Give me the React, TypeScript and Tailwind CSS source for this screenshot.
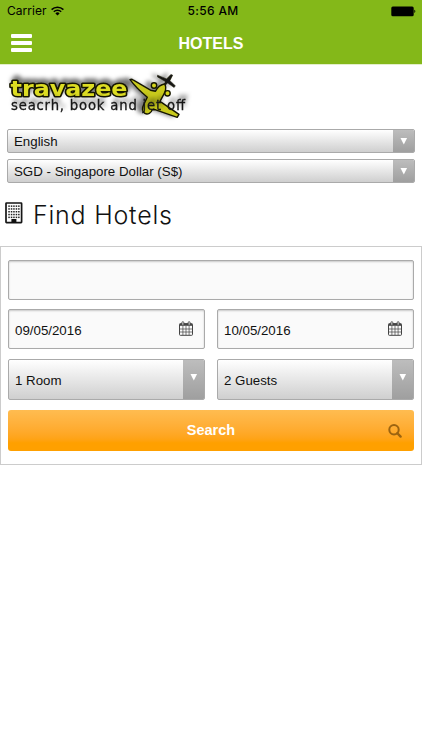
import type { ReactNode } from "react";

// ── Icons ─────────────────────────────────────────────

function WifiIcon() {
  return (
    <svg viewBox="0 0 13 10" className="h-[10px] w-[13px]" fill="none" stroke="black" strokeWidth="1.5">
      <path d="M0.6 3.6a8.4 8.4 0 0 1 11.8 0" />
      <path d="M2.8 5.8a5.3 5.3 0 0 1 7.4 0" />
      <path d="M6.5 9.6 4.4 7.4a3 3 0 0 1 4.2 0z" fill="black" stroke="none" />
    </svg>
  );
}

function BatteryIcon() {
  return (
    <svg viewBox="0 0 25 11" className="h-[11px] w-[25px]">
      <rect x="0.3" y="0.5" width="22.4" height="9.8" rx="1.5" />
      <path d="M23.3 3.8c1.4.3 1.4 2.9 0 3.2z" />
    </svg>
  );
}

function BuildingIcon() {
  return (
    <svg viewBox="0 0 18 22" className="mb-[3px] h-[22px] w-[18px]">
      <rect x="1" y="1" width="15.6" height="19.6" rx="0.5" fill="white" stroke="#161616" strokeWidth="1.7" />
      {[3.4, 6.2, 9, 11.8, 14.6].map((y) =>
        [3.3, 5.8, 8.2, 10.7, 13.1].map((x) => (
          <rect key={`${x}-${y}`} x={x} y={y} width="1.5" height="1.5" fill="#222" />
        )),
      )}
      <path d="M6.4 17h5v4h-5z" fill="#111" />
    </svg>
  );
}

function CalendarIcon() {
  return (
    <svg viewBox="0 0 14 15" className="mb-0.5 h-[15px] w-[14px]" fill="none" stroke="#444">
      <rect x="0.5" y="2.6" width="13" height="11.7" rx="0.8" />
      <path d="M0.8 3.8h12.4" strokeWidth="2" />
      <path d="M3.9 5v9M7 5v9M10.1 5v9M1 8h12M1 11h12" strokeWidth="0.7" />
      <rect x="2.9" y="0.7" width="1.9" height="3.5" rx="0.8" fill="#ddd" strokeWidth="0.8" />
      <rect x="9.2" y="0.7" width="1.9" height="3.5" rx="0.8" fill="#ddd" strokeWidth="0.8" />
    </svg>
  );
}

function SearchIcon() {
  return (
    <svg viewBox="0 0 14 14" className="size-[14px]" fill="none" stroke="#9c6410" strokeWidth="2">
      <circle cx="6" cy="5.8" r="4.7" />
      <path d="m9.4 9.2 3.2 3.4" strokeWidth="2.4" strokeLinecap="round" />
    </svg>
  );
}

function Logo() {
  return (
    <svg viewBox="0 0 182 50" className="h-[50px] w-[182px] overflow-visible">
      <defs>
        <filter id="lift" x="-10%" y="-40%" width="120%" height="180%">
          <feDropShadow dx="2" dy="-4" stdDeviation="2" floodColor="#000" floodOpacity="0.55" />
        </filter>
        <filter id="lift-plane" x="-30%" y="-30%" width="160%" height="160%">
          <feDropShadow dx="-5" dy="-1" stdDeviation="2.2" floodColor="#000" floodOpacity="0.5" />
        </filter>
      </defs>

      <text x="3.5" y="24.3" textLength="117" lengthAdjust="spacingAndGlyphs" fontSize="21" fontFamily="'DejaVu Sans', sans-serif" fill="#dddd23" stroke="#151500" strokeWidth="3" strokeLinejoin="round" paintOrder="stroke" fontWeight="700" filter="url(#lift)">travazee</text>

      {/* Plane */}
      <g stroke="#171700" strokeWidth="1.4" strokeLinejoin="round" filter="url(#lift-plane)">
        <path
          d="M123 7.6q1.5-.8 3.5.6l17 10 5 1c2-4 5-6.5 9.5-7.4 1.3 3.8.6 8-1.8 11.6l-3.2 6 19 13-1.8 3-21.5-7.6-3.4-.2c-1 3.2-4.4 5.4-7.5 3.8-3-1.6-2.8-5.6-.9-9.2l3.4-7c-6-5-12.6-11.2-17.3-17.6z"
          fill="#c9ca1d"
        />
        <circle cx="147" cy="13.5" r="2.7" fill="#d5d51f" />
        <circle cx="160.5" cy="21.3" r="2.7" fill="#d5d51f" />
        <path d="M150.5 3.2l9 3.7 4.4-4.5 1.8.8-2.8 5.5 5.4 5-1.2 1.8-6.4-4.4-2.8 2.4.2-4.2-7.6-4.4z" fill="#171717" strokeWidth="0.5" />
      </g>

      <text x="4" y="37.7" textLength="174" lengthAdjust="spacing" fontSize="13.2" fontFamily="'DejaVu Sans', sans-serif" fill="#161616" stroke="#161616" strokeWidth="0.3" filter="url(#lift)">seacrh, book and jet off</text>
    </svg>
  );
}

// ── Form controls ─────────────────────────────────────

/** Dropdown with the glossy grey face and the darker arrow block. */
function SelectBox({ label, tall = false }: { label: string; tall?: boolean }) {
  return (
    <button
      className={`flex w-full items-stretch overflow-hidden rounded-[2px] border border-[#aaa] bg-linear-to-b from-white to-[#cfcfcf] text-left text-[13.3px] ${
        tall ? "h-[41px]" : "h-6"
      }`}
    >
      <span className={`flex flex-1 items-center ${tall ? "pt-[3px] pl-1.5" : "pt-px pl-1.5"}`}>{label}</span>
      <span
        className={`flex w-[21px] justify-center bg-linear-to-b from-[#bdbdbd] to-[#9f9f9f] ${
          tall ? "pt-[14px]" : "pt-[8px]"
        }`}
      >
        <svg viewBox="0 0 8 7" className="h-[7px] w-2" fill="white">
          <path d="M0.5 0h6.6L3.8 6.4z" />
        </svg>
      </span>
    </button>
  );
}

function FieldBox({ children }: { children?: ReactNode }) {
  return (
    <div className="flex h-10 items-center justify-between rounded-[2px] border border-[#aaa] bg-[#fafafa] pr-[11px] pl-1.5 text-[13.3px] shadow-[inset_0_1px_2px_rgba(0,0,0,0.2)]">
      {children}
    </div>
  );
}

// ── Page ──────────────────────────────────────────────

export default function App() {
  return (
    <div className="h-[750px] w-[422px] overflow-hidden bg-white font-['Liberation_Sans',Arial,sans-serif] text-[#111]">
      <header className="h-16 bg-[#84b819]">
        <div className="grid h-[22px] grid-cols-3 items-center pr-1.5 pl-[7px] font-['Inter',sans-serif] text-[12px] text-black">
          <div className="flex items-center gap-1">
            <span className="tracking-[0.05px]">Carrier</span>
            <WifiIcon />
          </div>
          <span className="pl-[3px] text-center font-medium tracking-[0.35px]">5:56 AM</span>
          <div className="flex justify-end">
            <BatteryIcon />
          </div>
        </div>
        <div className="grid h-[42px] grid-cols-[44px_1fr_44px] items-center">
          <button aria-label="Menu" className="ml-[11px] flex w-[21px] flex-col gap-[3px]">
            <span className="h-1 rounded-[1px] bg-white" />
            <span className="h-1 rounded-[1px] bg-white" />
            <span className="h-1 rounded-[1px] bg-white" />
          </button>
          <h1 className="pt-0.5 text-center text-[16px] font-bold text-white">HOTELS</h1>
        </div>
      </header>

      <div className="border-t border-[#e3efc9] px-[7px] pt-[7px]">
        <Logo />
        <div className="mt-[7px] flex flex-col gap-1.5">
          <SelectBox label="English" />
          <SelectBox label="SGD - Singapore Dollar (S$)" />
        </div>
      </div>

      <div className="flex h-[63px] items-center gap-[10px] pl-[5px]">
        <BuildingIcon />
        <h2 className="pt-0.5 font-['Inter',sans-serif] text-[25px] font-light tracking-[0.78px]">Find Hotels</h2>
      </div>

      <form className="flex h-[219px] flex-col border border-[#ccc] px-[7px] pt-[13px]">
        <FieldBox />
        <div className="mt-[9px] grid grid-cols-[197px_197px] justify-between">
          <FieldBox>
            <span className="pt-[3px]">09/05/2016</span>
            <CalendarIcon />
          </FieldBox>
          <FieldBox>
            <span className="pt-[3px]">10/05/2016</span>
            <CalendarIcon />
          </FieldBox>
        </div>
        <div className="mt-[10px] grid grid-cols-[197px_197px] justify-between">
          <SelectBox label="1 Room" tall />
          <SelectBox label="2 Guests" tall />
        </div>
        <button
          type="button"
          className="mt-[10px] grid h-[41px] grid-cols-[1fr_auto_1fr] items-center rounded-[3px] bg-linear-to-b from-[#ffbc50] to-[#ffa000] to-80% text-[14.5px] font-bold text-white"
        >
          <span className="col-start-2 pt-px">Search</span>
          <span className="justify-self-end pr-3">
            <SearchIcon />
          </span>
        </button>
      </form>
    </div>
  );
}
